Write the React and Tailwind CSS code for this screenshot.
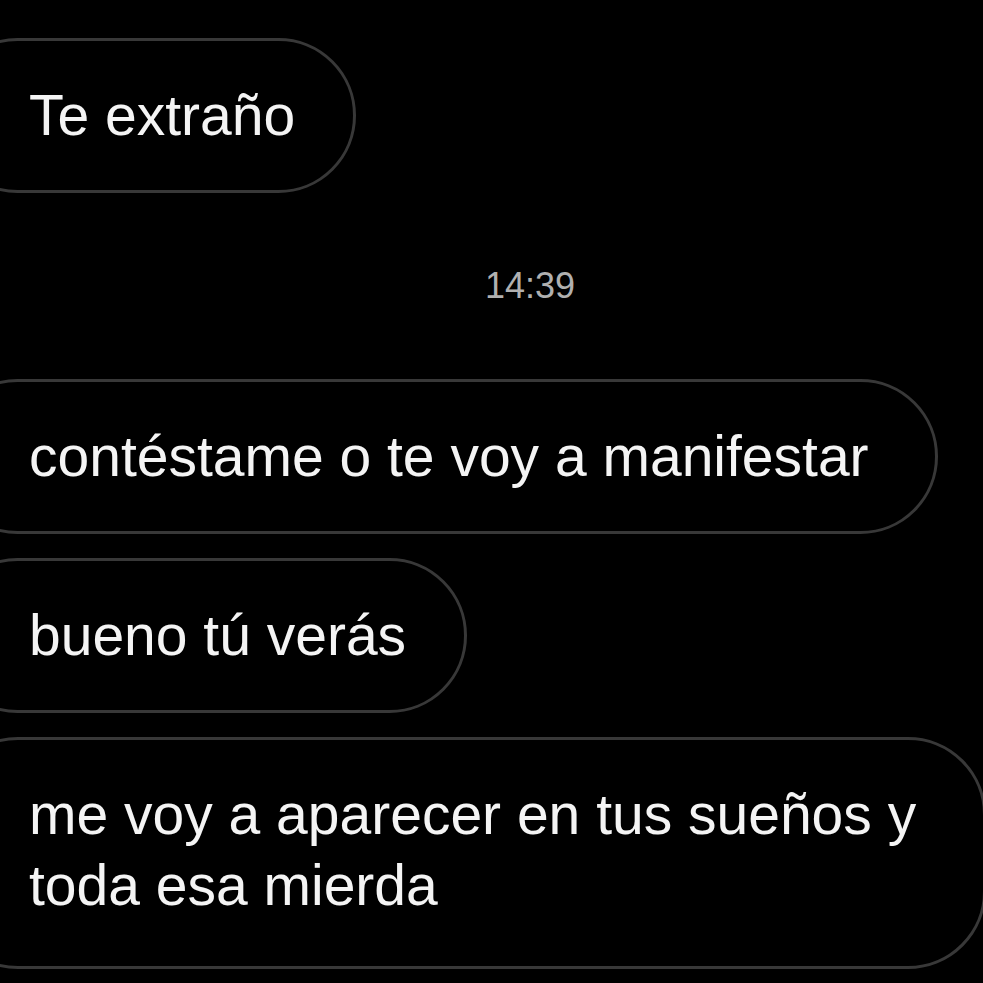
import React from 'react';

const Bubble = ({ children, className = '' }) => (
  <div
    className={`-ml-[60px] pl-[86px] pr-[58px] py-[39px] border-[3px] border-[#383838] rounded-[78px] text-[57px] leading-[71px] text-[#f4f4f4] ${className}`}
  >
    {children}
  </div>
);

const App = () => {
  return (
    <div
      className="w-[983px] h-[983px] bg-black overflow-hidden flex flex-col items-start pt-[38px]"
      style={{ fontFamily: '"Liberation Sans", Arial, sans-serif' }}
    >
      <Bubble className="w-fit">Te extraño</Bubble>

      <div className="self-stretch pl-[77px] mt-[71px] mb-[71px] text-center text-[36px] leading-[44px] text-[#b0b0b0]">
        14:39
      </div>

      <div className="flex flex-col items-start gap-[24px]">
        <Bubble className="w-fit pr-[66px]">contéstame o te voy a manifestar</Bubble>
        <Bubble className="w-fit">bueno tú verás</Bubble>
        <Bubble className="w-[1046px] pb-[45px]">me voy a aparecer en tus sueños y toda esa mierda</Bubble>
      </div>
    </div>
  );
};

export default App;
